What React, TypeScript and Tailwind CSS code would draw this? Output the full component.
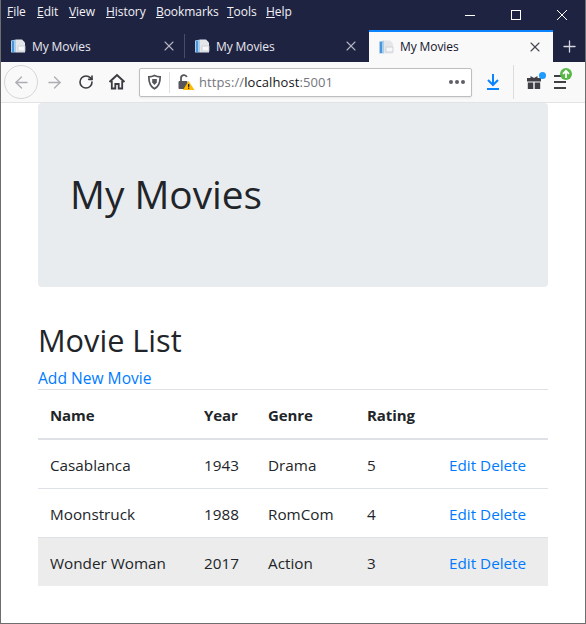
import { ArrowLeft, ArrowRight, Plus, RotateCw, X } from "lucide-react";

const movies = [
  { name: "Casablanca", year: 1943, genre: "Drama", rating: 5 },
  { name: "Moonstruck", year: 1988, genre: "RomCom", rating: 4 },
  { name: "Wonder Woman", year: 2017, genre: "Action", rating: 3 },
];

const menus = [
  { key: "F", rest: "ile", width: "w-[30px]" },
  { key: "E", rest: "dit", width: "w-[32px]" },
  { key: "V", rest: "iew", width: "w-[37px]" },
  { key: "H", rest: "istory", width: "w-[50px]" },
  { key: "B", rest: "ookmarks", width: "w-[71px]" },
  { key: "T", rest: "ools", width: "w-[39px]" },
  { key: "H", rest: "elp", width: "w-[30px]" },
];

function PageIcon() {
  return (
    <svg width="16" height="16" viewBox="0 0 16 16" className="shrink-0">
      <path d="M1 2.5 L6 1.5 V14.5 H1 Z" fill="#a9cdec" />
      <path d="M2 3 V14 H4 V2.8 Z" fill="#4a94d8" />
      <path d="M6 1.5 H12 L15 4.5 V14.5 H6 Z" fill="#e4e6ea" />
      <rect x="8" y="8" width="7" height="5" fill="#f6f7f8" stroke="#c9ccd2" strokeWidth="0.8" />
    </svg>
  );
}

function Tab({ active, divider }: { active?: boolean; divider?: boolean }) {
  return (
    <div
      className={
        active
          ? "flex h-[32px] w-[184px] items-center border-t-2 border-[#0a84ff] bg-[#f9f9fa] pl-[9px] pr-[10px] text-[#14142b]"
          : "flex h-[32px] w-[184px] items-center pl-[9px] pr-[10px] text-[#e8e8ee]"
      }
    >
      <PageIcon />
      <span className={active ? "ml-[6px] flex-1 text-[12px] tracking-[-0.1px]" : "ml-[6px] flex-1 pt-[2px] text-[12px] tracking-[-0.1px]"}>
        My Movies
      </span>
      <X className={active ? "text-[#45454d]" : "text-[#b4b5c0]"} size={16} strokeWidth={1.6} />
      {divider && <div className="ml-[7px] mr-[-10px] h-[24px] w-px bg-[#4a4d68]" />}
    </div>
  );
}

export default function App() {
  return (
    <div className="h-[624px] w-[586px] overflow-hidden border-x border-b border-[#6e6e6e] bg-white font-['Open_Sans',sans-serif] text-[#212529]">
      <div className="bg-[#1f2342]">
        <div className="flex h-[30px] items-start justify-between">
          <div className="flex pl-[6px] pt-[3px] text-[12px] leading-[17px] tracking-[-0.05px] text-[#f2f2f6]">
            {menus.map((menu, i) => (
              <span key={i} className={menu.width}>
                <span className="underline">{menu.key}</span>
                {menu.rest}
              </span>
            ))}
          </div>
          <div className="flex items-center pr-[18px] pt-[10px] text-white">
            <div className="mr-[36px] h-px w-[10px] bg-white" />
            <div className="mr-[36px] h-[10px] w-[10px] border border-white" />
            <svg width="10" height="10" viewBox="0 0 10 10">
              <path d="M0 0 L10 10 M10 0 L0 10" stroke="currentColor" strokeWidth="1" />
            </svg>
          </div>
        </div>
        <div className="flex h-[32px] items-center">
          <Tab divider />
          <Tab />
          <Tab active />
          <Plus size={19} strokeWidth={1.6} className="ml-[7px] text-[#d6d6de]" />
        </div>
      </div>

      <div className="flex h-[41px] items-center border-b border-[#e3e3e6] bg-[#f9f9fa]">
        <div className="ml-[3px] flex h-[34px] w-[34px] items-center justify-center rounded-full border border-[#d6d6d9] text-[#adadb3]">
          <ArrowLeft size={19} strokeWidth={1.7} />
        </div>
        <ArrowRight size={19} strokeWidth={1.7} className="ml-[7px] text-[#adadb3]" />
        <RotateCw size={16} strokeWidth={2.4} className="ml-[14px] text-[#3b3b40]" />
        <svg width="18" height="18" viewBox="0 0 18 18" className="ml-[14px] text-[#3b3b40]">
          <path d="M1.5 9 L9 2 L16.5 9" fill="none" stroke="currentColor" strokeWidth="2" />
          <path d="M3.8 8 V15.5 H7.3 V11 H10.7 V15.5 H14.2 V8" fill="none" stroke="currentColor" strokeWidth="1.8" />
        </svg>
        <div className="ml-[13px] flex h-[29px] w-[333px] items-center rounded-[2px] border border-[#bebebe] bg-white shadow-[0_1px_2px_rgba(0,0,0,0.08)]">
          <svg width="15" height="16" viewBox="0 0 15 16" className="ml-[7px] text-[#55555c]">
            <path d="M7.5 1.5 C5.5 2.5 3.5 2.8 1.8 2.8 C1.8 9 3 12.5 7.5 14.8 C12 12.5 13.2 9 13.2 2.8 C11.5 2.8 9.5 2.5 7.5 1.5 Z" fill="none" stroke="currentColor" strokeWidth="1.7" />
            <path d="M5.2 5 H9.8 V8.5 L7.5 11 L5.2 8.5 Z" fill="currentColor" />
          </svg>
          <div className="ml-[7px] h-[21px] w-px bg-[#e0e0e3]" />
          <svg width="18" height="18" viewBox="0 0 18 18" className="ml-[7px]">
            <path d="M4 9 V5 a3 3 0 0 1 5.8 -1" fill="none" stroke="#55555c" strokeWidth="1.8" />
            <rect x="1.5" y="8" width="9" height="8" rx="1" fill="#55555c" />
            <path d="M11.5 8 L17.5 17 H6 Z" fill="#ffb900" />
            <rect x="11" y="11" width="1.3" height="3" fill="#222" />
            <rect x="11" y="14.6" width="1.3" height="1.2" fill="#222" />
          </svg>
          <span className="ml-[4px] flex-1 pt-[1px] text-[13px] tracking-[0.1px] text-[#75757d]">
            https://<span className="text-[#16161a]">localhost</span>:5001
          </span>
          <div className="mr-[6px] flex gap-[2px]">
            <span className="h-[4px] w-[4px] rounded-full bg-[#5f5f66]" />
            <span className="h-[4px] w-[4px] rounded-full bg-[#5f5f66]" />
            <span className="h-[4px] w-[4px] rounded-full bg-[#5f5f66]" />
          </div>
        </div>
        <svg width="14" height="18" viewBox="0 0 14 18" className="ml-[14px]">
          <path d="M7 1 V11 M2 7 L7 12 L12 7" fill="none" stroke="#0a84ff" strokeWidth="2" />
          <rect x="1" y="15" width="12" height="2" fill="#0a84ff" />
        </svg>
        <div className="ml-[13px] h-[34px] w-px bg-[#dcdcdf]" />
        <div className="relative ml-[13px] h-[18px] w-[14px]">
          <svg width="14" height="14" viewBox="0 0 14 14" className="absolute left-0 top-[2px]">
            <rect x="0" y="3" width="14" height="3.5" fill="#3f3f45" />
            <rect x="0.8" y="7.5" width="5.5" height="6.5" fill="#3f3f45" />
            <rect x="7.7" y="7.5" width="5.5" height="6.5" fill="#3f3f45" />
            <path d="M3.5 1 L7 3 L10.5 1 V3 H3.5 Z" fill="#3f3f45" />
          </svg>
          <span className="absolute left-[12px] top-[-1px] h-[7px] w-[7px] rounded-full bg-[#1e9bff]" />
        </div>
        <div className="relative ml-[13px] h-[18px] w-[12px]">
          <div className="absolute left-0 top-[2px] h-[2px] w-[8px] bg-[#3f3f45]" />
          <div className="absolute left-0 top-[8px] h-[2px] w-[12px] bg-[#3f3f45]" />
          <div className="absolute left-0 top-[14px] h-[2px] w-[12px] bg-[#3f3f45]" />
          <svg width="12" height="12" viewBox="0 0 12 12" className="absolute left-[6px] top-[-5px]">
            <circle cx="6" cy="6" r="6" fill="#58b947" />
            <path d="M6 10 V3 M3 5.8 L6 2.8 L9 5.8" fill="none" stroke="white" strokeWidth="1.8" />
          </svg>
        </div>
      </div>

      <main className="px-[37px]">
        <div className="flex h-[184px] items-center rounded-[4px] bg-[#e9ecef] px-[32px] pb-[2px]">
          <h1 className="text-[38.8px] font-normal leading-[48px]">My Movies</h1>
        </div>
        <h2 className="mt-[34px] text-[30.7px] font-normal leading-[38px]">Movie List</h2>
        <a href="#" className="mt-[8px] block text-[15.6px] leading-[22px] text-[#007bff]">
          Add New Movie
        </a>
        <table className="w-[510px] table-fixed border-collapse text-[15.25px] leading-[24px]">
          <colgroup>
            <col className="w-[154px]" />
            <col className="w-[64px]" />
            <col className="w-[99px]" />
            <col className="w-[82px]" />
            <col className="w-[111px]" />
          </colgroup>
          <thead>
            <tr className="border-y border-b-2 border-[#dee2e6] text-left text-[15px] font-bold tracking-[-0.1px]">
              <th className="px-[12px] pb-[11px] pt-[13px]">Name</th>
              <th className="px-[12px] pb-[11px] pt-[13px]">Year</th>
              <th className="px-[12px] pb-[11px] pt-[13px]">Genre</th>
              <th className="px-[12px] pb-[11px] pt-[13px]">Rating</th>
              <th className="px-[12px] pb-[11px] pt-[13px]" />
            </tr>
          </thead>
          <tbody>
            {movies.map((movie, i) => (
              <tr key={movie.name} className={i === 2 ? "bg-[#ececec]" : "border-b border-[#dee2e6]"}>
                <td className="px-[12px] pb-[11px] pt-[13px]">{movie.name}</td>
                <td className="px-[12px] pb-[11px] pt-[13px]">{movie.year}</td>
                <td className="px-[12px] pb-[11px] pt-[13px]">{movie.genre}</td>
                <td className="px-[12px] pb-[11px] pt-[13px]">{movie.rating}</td>
                <td className="whitespace-nowrap px-[12px] pb-[11px] pt-[13px] text-[#007bff]">
                  <a href="#">Edit</a> <a href="#">Delete</a>
                </td>
              </tr>
            ))}
          </tbody>
        </table>
      </main>
    </div>
  );
}
